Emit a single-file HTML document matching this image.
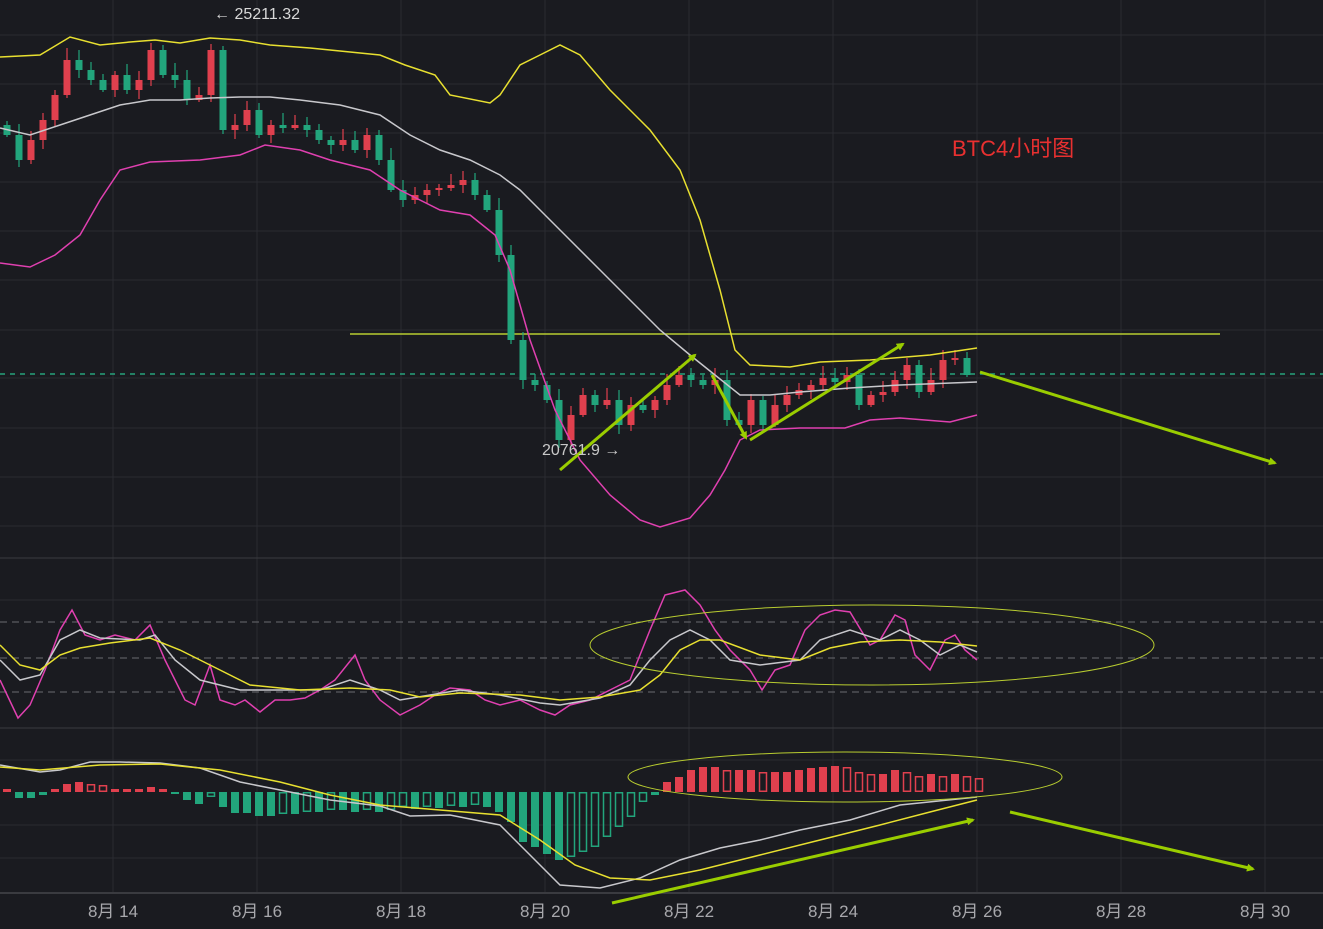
<!DOCTYPE html><html><head><meta charset="utf-8"><style>
html,body{margin:0;padding:0;background:#1a1b20;overflow:hidden}
svg{display:block}
text{font-family:"Liberation Sans","Noto Sans CJK SC",sans-serif}
</style></head><body>
<svg id="s" width="1323" height="929" xmlns="http://www.w3.org/2000/svg">
<rect width="1323" height="929" fill="#1a1b20"/>
<g id="grid" stroke="#2a2b31" stroke-width="1"></g>
<line x1="0" y1="558" x2="1323" y2="558" stroke="#3a3b40"/>
<line x1="0" y1="728" x2="1323" y2="728" stroke="#3a3b40"/>
<line x1="0" y1="893" x2="1323" y2="893" stroke="#3a3b40" stroke-width="2"/>
<g stroke="#6a6b70" stroke-dasharray="7,5"><line x1="0" y1="622" x2="1323" y2="622"/><line x1="0" y1="658" x2="1323" y2="658"/><line x1="0" y1="692" x2="1323" y2="692"/></g>
<line x1="350" y1="334" x2="1220" y2="334" stroke="#b8cc30" stroke-width="1.5"/>
<line x1="0" y1="374" x2="1323" y2="374" stroke="#26a17b" stroke-width="1.5" stroke-dasharray="5,5"/>
<g id="c"></g>
<g id="h"></g>
<g fill="none" stroke-width="1.5">
<polyline stroke="#e8e030" points="0,57 40,55 70,37 100,45 130,42 155,40 180,43 210,38 240,40 270,45 310,48 380,55 405,65 435,75 450,95 490,103 500,95 520,65 540,55 560,45 580,55 610,90 650,130 680,170 700,220 720,290 735,350 750,365 790,367 820,362 870,360 930,355 977,348"/>
<polyline stroke="#c8c8cc" points="0,128 30,135 60,125 90,115 120,105 150,100 180,100 210,98 240,97 270,97 300,100 340,105 380,115 410,135 440,150 470,160 500,175 520,190 540,210 570,240 600,270 630,300 660,330 690,355 715,375 740,395 770,395 800,392 850,388 900,385 977,382"/>
<polyline stroke="#e040b0" points="0,263 30,267 55,255 80,235 100,200 120,170 150,162 200,160 240,155 265,145 300,150 330,160 370,170 400,190 440,210 470,215 495,235 510,270 530,340 555,410 580,460 610,495 640,520 660,527 690,518 710,495 725,470 740,440 760,430 800,428 845,428 870,420 900,418 950,422 977,415"/>
<polyline stroke="#e040b0" points="0,680 18,718 30,705 45,670 60,630 72,610 85,635 100,640 115,635 135,640 150,625 165,660 185,700 195,705 210,665 220,700 235,705 245,700 260,712 275,700 290,700 305,698 320,690 335,680 355,655 365,680 380,700 400,715 420,705 435,695 450,688 470,690 485,700 500,705 520,700 540,710 555,715 570,705 590,700 610,690 630,680 650,630 665,595 685,590 700,605 715,630 730,650 750,670 762,690 775,670 790,665 805,630 820,615 835,610 850,612 870,645 880,640 895,615 905,620 915,655 930,670 945,640 955,635 965,650 977,660"/>
<polyline stroke="#c8c8cc" points="0,660 20,680 40,675 60,640 80,630 100,638 140,640 155,635 175,660 200,680 240,690 270,690 320,690 350,680 380,690 400,700 430,695 460,690 500,695 540,703 560,705 600,698 630,685 650,660 670,640 690,630 710,640 730,660 760,665 800,660 820,640 850,630 880,640 900,630 920,640 940,655 960,645 977,652"/>
<polyline stroke="#e8e030" points="0,645 20,665 40,670 60,655 80,648 110,643 150,638 180,650 210,665 250,685 300,690 350,688 390,690 420,697 460,693 520,695 560,700 600,697 640,690 660,675 680,650 700,640 720,640 760,655 800,660 830,648 860,642 900,640 940,642 977,646"/>
<polyline stroke="#c8c8cc" points="0,765 40,772 60,770 90,762 120,762 160,763 200,768 240,782 280,790 330,800 380,806 410,816 450,815 500,825 530,855 560,885 600,888 640,878 680,860 720,848 760,840 800,830 850,820 900,805 977,797"/>
<polyline stroke="#e8e030" points="0,767 40,770 100,765 160,764 220,770 280,782 330,795 380,805 440,810 500,815 540,840 575,865 610,878 650,880 700,870 760,855 820,840 880,825 930,812 977,800"/>
<ellipse cx="872" cy="645" rx="282" ry="40" stroke="#b8cc30" stroke-width="1"/>
<ellipse cx="845" cy="777" rx="217" ry="25" stroke="#b8cc30" stroke-width="1"/>
</g>
<defs><marker id="a" markerWidth="8" markerHeight="8" refX="6" refY="4" orient="auto" markerUnits="userSpaceOnUse"><path d="M0,0 L8,4 L0,8 z" fill="#9acd00"/></marker></defs>
<g stroke="#9acd00" stroke-width="3" fill="none" marker-end="url(#a)">
<line x1="560" y1="470" x2="695" y2="355"/>
<line x1="712" y1="375" x2="746" y2="438"/>
<line x1="750" y1="440" x2="903" y2="344"/>
<line x1="980" y1="372" x2="1275" y2="463"/>
<line x1="612" y1="903" x2="973" y2="820"/>
<line x1="1010" y1="812" x2="1253" y2="869"/>
</g>
<text x="214" y="19" fill="#d8d8d8" font-size="16">← 25211.32</text>
<text x="542" y="455" fill="#c8c8c8" font-size="16">20761.9 →</text>
<text x="952" y="156" fill="#e83030" font-size="22">BTC4小时图</text>
<g id="ax" fill="#a8a8ac" font-size="17" text-anchor="middle"></g>
</svg>
<script>
var NS="http://www.w3.org/2000/svg";
function el(p,t,a){var e=document.createElementNS(NS,t);for(var k in a)e.setAttribute(k,a[k]);p.appendChild(e);return e;}
var g=document.getElementById('grid');
[113,257,401,545,689,833,977,1121,1265].forEach(function(x){el(g,'line',{x1:x,y1:0,x2:x,y2:893});});
[35,84,133,182,231,280,330,378,428,477,526,600,760,825,858].forEach(function(y){el(g,'line',{x1:0,y1:y,x2:1323,y2:y});});
var ax=document.getElementById('ax');
[14,16,18,20,22,24,26,28,30].forEach(function(d,i){el(ax,'text',{x:113+144*i,y:917}).textContent="8月 "+d;});
var cl=[135,160,140,120,95,60,70,80,90,75,90,80,50,75,80,100,95,50,130,125,110,135,125,128,125,130,140,145,140,150,135,160,190,200,195,190,188,185,180,195,210,255,340,380,385,400,440,415,395,405,400,425,405,410,400,385,375,380,385,380,420,425,400,425,405,395,390,385,378,382,375,405,395,392,380,365,392,380,360,358,375];
var c=document.getElementById('c');var prev=125;
cl.forEach(function(y,i){var x=7+12*i;var o=prev;var top=Math.min(o,y),bot=Math.max(o,y);if(bot-top<2)bot=top+2;
var col=y>o?'#22a57c':'#e0404e';var w=4+((i*7)%9);
el(c,'line',{x1:x,y1:top-w,x2:x,y2:bot+((i*5)%8)+2,stroke:col,'stroke-width':1.2});
el(c,'rect',{x:x-3.5,y:top,width:7,height:bot-top,fill:col});prev=y;});
var hv=[3,-6,-6,-3,3,8,10,8,7,3,3,3,5,3,-2,-8,-12,-5,-15,-21,-21,-24,-24,-22,-22,-20,-20,-18,-18,-20,-18,-20,-18,-15,-17,-15,-16,-14,-15,-13,-15,-20,-30,-50,-55,-62,-68,-65,-60,-55,-45,-35,-25,-10,-3,10,15,22,25,25,22,22,22,20,20,20,22,24,25,26,25,20,18,18,22,20,16,18,16,18,16,14];
var h=document.getElementById('h');var ph=0;
hv.forEach(function(v,i){var x=7+12*i;var col=v>0?'#e0404e':'#22a57c';var y0=792;var top=v>0?y0-v:y0,hh=Math.abs(v);
var hollow=Math.abs(v)<Math.abs(ph)&&hh>4;
if(hollow)el(h,'rect',{x:x-3.5,y:top+0.75,width:7,height:hh-1.5,fill:'none',stroke:col,'stroke-width':1.5});
else el(h,'rect',{x:x-4,y:top,width:8,height:hh,fill:col});ph=v;});
</script>
</body></html>
